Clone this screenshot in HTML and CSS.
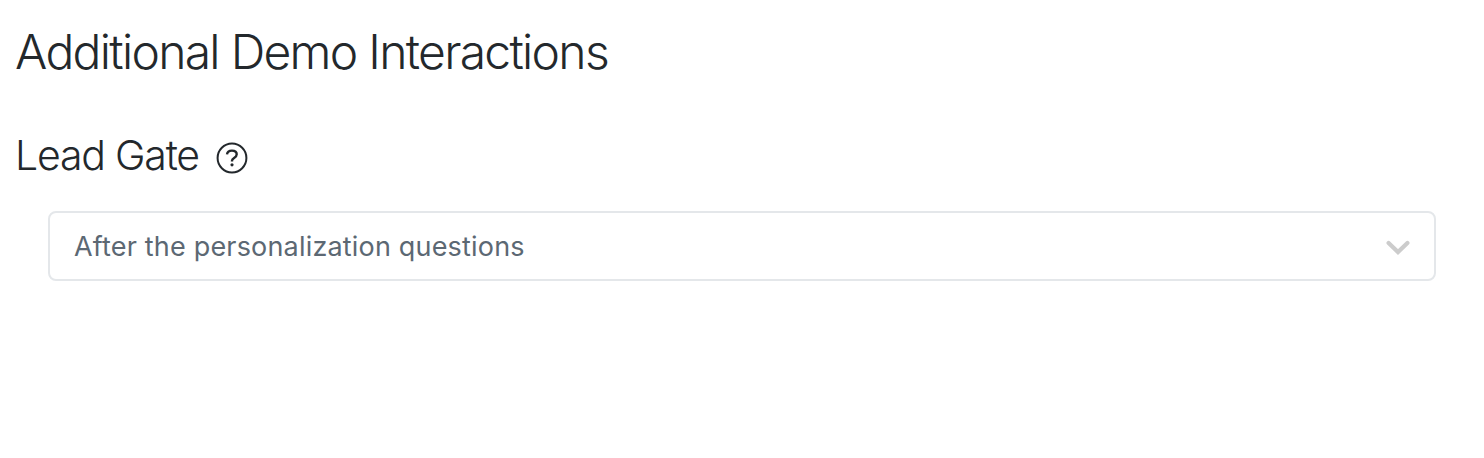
FILE: index.html
```html
<!DOCTYPE html>
<html lang="en">
<head>
    <meta charset="UTF-8">
    <meta name="viewport" content="width=device-width, initial-scale=1.0">
    <title>Additional Demo Interactions</title>
    <link rel="stylesheet" href="styles.css">
</head>
<body>
<div class="container">
    <h1 class="page-title">Additional Demo Interactions</h1>
    <div class="section-header">
        <h2 class="section-title">Lead Gate</h2>
        <svg class="help-icon" viewBox="0 0 32 32" fill="none" stroke="#23282c" stroke-width="2">
            <circle cx="16" cy="16" r="14.4"/>
            <path d="M11 12.3C11.3 9.8 13.2 8.6 15.9 8.6c2.8 0 4.8 1.4 4.8 3.7 0 1.8-1 2.7-2.6 3.7-1.5.9-2.1 1.5-2.1 2.8v.6" stroke-width="2.4"/>
            <circle cx="16" cy="22.8" r="1.6" fill="#23282c" stroke="none"/>
        </svg>
    </div>
    <div class="select-box">
        <span class="select-value">After the personalization questions</span>
        <svg class="select-arrow" viewBox="0 0 24 16" fill="none" stroke="#cccccc" stroke-width="4.2" stroke-linecap="round">
            <path d="M2.6 3l9.4 9 9.4-9"/>
        </svg>
    </div>
</div>
</body>
</html>
```

FILE: styles.css
```css
body {
    margin: 0;
    font-family: 'Inter', sans-serif;
    color: #23282c;
    background-color: #ffffff;
}

.container {
    padding: 23px 48px 0 15px;
}

.page-title {
    margin: 0;
    font-size: 48px;
    font-weight: 300;
    line-height: 58px;
    letter-spacing: -1.7px;
    white-space: nowrap;
}

.section-header {
    display: flex;
    align-items: center;
    gap: 17px;
    margin-top: 48px;
}

.section-title {
    margin: 0;
    font-size: 41px;
    font-weight: 300;
    line-height: 52px;
    letter-spacing: -1.2px;
}

.help-icon {
    width: 32px;
    height: 32px;
    margin-top: 5px;
}

.select-box {
    display: flex;
    align-items: center;
    justify-content: space-between;
    box-sizing: border-box;
    height: 70px;
    margin: 30px 0 0 33px;
    padding: 0 24px;
    border: 2px solid #e4e7ea;
    border-radius: 8px;
}

.select-value {
    font-size: 27px;
    letter-spacing: 0.18px;
    color: #5c6873;
}

.select-arrow {
    width: 24px;
    height: 16px;
    margin-top: 3px;
}
```
